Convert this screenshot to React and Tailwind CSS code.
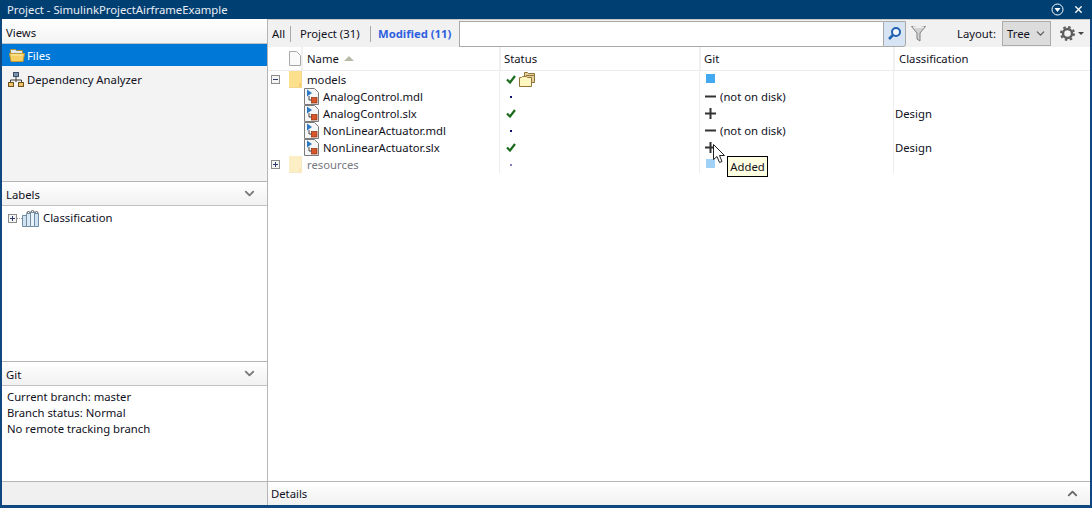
import { X, ChevronDown, ChevronUp } from "lucide-react";

const FONT = "font-['Noto_Sans','Open_Sans',sans-serif]";
const COLS = "grid grid-cols-[33px_198px_200px_194px_197px]";

const rows = [
  { name: "models", kind: "folder", tree: "minus", status: "check", folder: true, git: "square", cls: "" },
  { name: "AnalogControl.mdl", kind: "file", status: "dot", git: "minus", note: "(not on disk)", cls: "" },
  { name: "AnalogControl.slx", kind: "file", status: "check", git: "plus", cls: "Design" },
  { name: "NonLinearActuator.mdl", kind: "file", status: "dot", git: "minus", note: "(not on disk)", cls: "" },
  { name: "NonLinearActuator.slx", kind: "file", status: "check", git: "plus", cls: "Design" },
  { name: "resources", kind: "folder", tree: "plus", status: "dot", git: "square", faded: true, cls: "" },
];

function TreeBox({ type }) {
  return (
    <svg width="9" height="9" viewBox="0 0 9 9" className="shrink-0">
      <rect x="0.5" y="0.5" width="8" height="8" fill="#f4f4f4" stroke="#8c8c8c" />
      <path d={type === "plus" ? "M2 4.5h5M4.5 2v5" : "M2 4.5h5"} stroke="#2d3c6a" />
    </svg>
  );
}

function FolderTab({ faded }) {
  return (
    <svg width="13" height="17" viewBox="0 0 13 17" className={faded ? "opacity-50" : ""}>
      <rect x="0" y="0" width="12" height="16" fill="#fde08c" />
      <path d="M10 16v-4h3v5H0v-1z" fill="#f7cf70" />
      <path d="M12.5 0v16.5H0" fill="none" stroke="#f0d590" />
    </svg>
  );
}

function ModelFile() {
  return (
    <svg width="15" height="17" viewBox="0 0 15 17">
      <path d="M.5.5h10l4 4v12H.5z" fill="#f6f6f6" stroke="#7a7a7a" />
      <path d="M3 1.5v7l5-3.5z" fill="#2c78c4" />
      <path d="M5 8v4h3" fill="none" stroke="#444" />
      <rect x="7.5" y="9.5" width="5.5" height="5.5" fill="#d9562a" stroke="#8a3010" strokeWidth="0.7" />
    </svg>
  );
}

function OpenFolder() {
  return (
    <svg width="16" height="15" viewBox="0 0 16 15">
      <path d="M5.5 .5h3l1 1h6v9h-10z" fill="#e3cf9b" stroke="#93743a" />
      <path d="M7 3.5h8.5" stroke="#93743a" />
      <path d="M.5 5.5h2l1-1h4l1 1h4v9H.5z" fill="#fff6c0" stroke="#93743a" />
    </svg>
  );
}

function FilesFolder() {
  return (
    <svg width="16" height="13" viewBox="0 0 16 13">
      <path d="M1.5 .5h5l1 1h6v4h-12z" fill="#dfe8f0" stroke="#a98a3a" />
      <path d="M.5 4.5h13l2 0-1.5 8H2z" fill="#f7cf63" stroke="#c79a32" />
      <path d="M2 6h12" stroke="#fdeeb0" />
    </svg>
  );
}

function GreenCheck() {
  return (
    <svg width="10" height="9" viewBox="0 0 10 9">
      <path d="M1 4.5l3 3L9 1" fill="none" stroke="#1c6b1c" strokeWidth="2.2" />
    </svg>
  );
}

function GitMark({ type, faded }) {
  if (type === "square") {
    return <div className={`w-[9px] h-[9px] ml-px -mt-[2px] ${faded ? "bg-[#a0d2f8]" : "bg-[#42a9f1]"}`} />;
  }
  return (
    <svg width="11" height="11" viewBox="0 0 11 11">
      <path d={type === "plus" ? "M0 5.5h11M5.5 0v11" : "M0 5.5h11"} stroke="#333" strokeWidth="2" />
    </svg>
  );
}

function PanelHeader({ title }) {
  return (
    <div className="h-6 flex items-center justify-between pl-[4px] pr-[10px] bg-gradient-to-b from-white to-[#f1f1f1] border-b border-[#c2c2c2] shrink-0">
      <span className="pt-[2px]">{title}</span>
      <ChevronDown size={15} strokeWidth={3} className="text-[#7a7a7a]" />
    </div>
  );
}

function TreeRow({ row }) {
  return (
    <div className={`${COLS} h-[17px] items-center`}>
      <div className="flex items-center pl-[3px]">{row.tree && <TreeBox type={row.tree} />}</div>
      <div className={`flex items-center ${row.kind === "file" ? "gap-[4px] pl-[3px]" : "gap-[5px] -ml-[12px]"} ${row.faded ? "text-[#77777f]" : ""}`}>
        {row.kind === "folder" ? <FolderTab faded={row.faded} /> : <ModelFile />}
        <span>{row.name}</span>
      </div>
      <div className="flex items-center h-full pl-[6px] gap-[3px] border-l border-[#ededed]">
        {row.status === "check" ? (
          <GreenCheck />
        ) : (
          <div className={`w-[2px] h-[2px] ml-[4px] ${row.faded ? "bg-[#8080c0]" : "bg-[#101070]"}`} />
        )}
        {row.folder && <OpenFolder />}
      </div>
      <div className="flex items-center h-full pl-[5px] gap-[4px] border-l border-[#ededed]">
        <GitMark type={row.git} faded={row.faded} />
        {row.note && <span>{row.note}</span>}
      </div>
      <div className="flex items-center h-full pl-px border-l border-[#ededed]">{row.cls}</div>
    </div>
  );
}

export default function App() {
  return (
    <div className={`${FONT} w-[1092px] h-[508px] flex flex-col bg-[#0f477f] text-[11.3px] leading-none text-[#10101c] overflow-hidden`}>
      {/* title bar */}
      <div className="h-[19px] flex items-center justify-between pl-[7px] pr-[8px] bg-[#003f72] text-[#e8eef4] shrink-0">
        <span>Project - SimulinkProjectAirframeExample</span>
        <div className="flex items-center gap-[9px]">
          <svg width="13" height="13" viewBox="0 0 13 13">
            <circle cx="6.5" cy="6.5" r="5.5" fill="none" stroke="#fff" />
            <path d="M3.5 5h6l-3 4z" fill="#fff" />
          </svg>
          <X size={11} strokeWidth={3} className="text-white" />
        </div>
      </div>

      <div className="flex-1 flex mx-[2px] mb-[3px] min-h-0 bg-white">
        {/* left panel */}
        <div className="w-[266px] flex flex-col border-r border-[#b5b5b5] shrink-0">
          <div className="h-[162px] flex flex-col bg-[#f3f3f3] shrink-0">
            <div className="h-[25px] flex items-center pl-[4px] pt-[4px] bg-gradient-to-b from-white to-[#f3f3f3] border-b border-[#c2c2c2]">Views</div>
            <div className="h-[22px] flex items-center gap-[2px] pl-[7px] bg-[#0078d7] text-white">
              <FilesFolder />
              <span className="pt-px">Files</span>
            </div>
            <div className="h-[27px] flex items-center gap-[3px] pl-[6px]">
              <svg width="16" height="15" viewBox="0 0 16 15">
                <rect x="5.5" y=".5" width="5" height="4" fill="#7c93ad" stroke="#3d4e66" />
                <path d="M8 5v3M2.5 10V8h11v2M8 8v2" fill="none" stroke="#3d3d3d" />
                <rect x=".5" y="10.5" width="5" height="4" fill="#f0c463" stroke="#6c5422" />
                <rect x="10.5" y="10.5" width="5" height="4" fill="#f0c463" stroke="#6c5422" />
              </svg>
              <span className="pt-px">Dependency Analyzer</span>
            </div>
          </div>
          <div className="h-px bg-[#b5b5b5] shrink-0" />
          <div className="h-[179px] flex flex-col shrink-0">
            <PanelHeader title="Labels" />
            <div className="flex items-center pl-[6px] h-[24px]">
              <TreeBox type="plus" />
              <div className="w-[5px] border-t border-dotted border-[#9a9a9a]" />
              <svg width="17" height="17" viewBox="0 0 17 17">
                <path d="M.5 5.5h4v11h-4z" fill="#cfe3f2" stroke="#6f8ca3" />
                <path d="M4.5 3.5h4v13h-4z" fill="#dceaf5" stroke="#6f8ca3" />
                <path d="M8.5 2.5h4v14h-4z" fill="#e8f2f9" stroke="#6f8ca3" />
                <path d="M12.5 3.5h4v13h-4z" fill="#cfe3f2" stroke="#6f8ca3" />
                <path d="M5 3a1.5 1.5 0 0 1 3 0M9 2a1.5 1.5 0 0 1 3 0M13 3a1.5 1.5 0 0 1 3 0" fill="none" stroke="#555" />
              </svg>
              <span className="ml-[4px]">Classification</span>
            </div>
          </div>
          <div className="h-px bg-[#b5b5b5] shrink-0" />
          <div className="flex-1 flex flex-col min-h-0">
            <PanelHeader title="Git" />
            <div className="pl-[5px] pt-[3px] leading-[16px]">
              <div>Current branch: master</div>
              <div>Branch status: Normal</div>
              <div>No remote tracking branch</div>
            </div>
          </div>
          <div className="h-[24px] bg-[#f0f0f0] border-t border-[#b5b5b5] shrink-0" />
        </div>

        {/* right panel */}
        <div className="flex-1 flex flex-col min-w-0 relative">
          <div className="h-[28px] flex items-center bg-[#f1f1f1] border-t border-[#c8c8c8] shrink-0">
            <span className="pl-[4px] w-[22px] shrink-0">All</span>
            <div className="w-px h-[16px] bg-[#a8a8a8]" />
            <span className="ml-[9px] w-[70px] shrink-0">Project (31)</span>
            <div className="w-px h-[16px] bg-[#a8a8a8]" />
            <span className="ml-[7px] w-[81px] shrink-0 font-bold text-[#2f5fe0]">Modified (11)</span>
            <div className="h-[26px] w-[424px] bg-white border border-[#a9a9a9] border-r-0 shrink-0" />
            <div className="h-[26px] w-[23px] flex items-center justify-center bg-[#d7e4f3] border border-[#a9a9a9] rounded-br-[3px] shrink-0">
              <svg width="15" height="15" viewBox="0 0 15 15">
                <circle cx="9" cy="6" r="4" fill="#f4f8fc" stroke="#1f62b0" strokeWidth="2" />
                <path d="M6 9l-4 4" stroke="#1f62b0" strokeWidth="2.5" />
              </svg>
            </div>
            <svg width="15" height="17" viewBox="0 0 15 17" className="ml-[5px] shrink-0">
              <path d="M.5 1.5h14L9 8v8l-3-2V8z" fill="#d2d2d2" stroke="#808080" />
              <ellipse cx="7.5" cy="2" rx="6" ry="1" fill="#f2f2f2" />
            </svg>
            <span className="ml-[31px] w-[39px] shrink-0">Layout:</span>
            <div className="ml-[6px] w-[49px] h-[25px] flex items-center justify-between pl-[4px] pr-[3px] bg-[#dcdcdc] border border-[#ababab] shrink-0">
              <span>Tree</span>
              <ChevronDown size={13} className="text-[#555]" />
            </div>
            <svg width="15" height="15" viewBox="0 0 15 15" className="ml-[9px] shrink-0">
              <circle cx="7.5" cy="7.5" r="4.5" fill="#f4f4f4" stroke="#5e5e5e" strokeWidth="2.5" />
              <circle cx="7.5" cy="7.5" r="6.5" fill="none" stroke="#5e5e5e" strokeWidth="2" strokeDasharray="2.5 2.6" />
            </svg>
            <div className="ml-[3px] w-0 h-0 border-x-[3px] border-x-transparent border-t-[3px] border-t-[#444]" />
          </div>

          <div className={`${COLS} h-[24px] items-center border-b border-[#ececec] shrink-0`}>
            <div className="flex justify-end h-full items-center">
              <svg width="12" height="15" viewBox="0 0 12 15">
                <path d="M.5.5h7l4 4v10H.5z" fill="#fafafa" stroke="#a8a8a8" />
              </svg>
            </div>
            <div className="flex items-center gap-[5px] pl-[4px] h-full border-l-2 border-[#f0f0f0]">
              <span>Name</span>
              <div className="w-0 h-0 border-x-[5px] border-x-transparent border-b-[5px] border-b-[#b9b9a8]" />
            </div>
            <div className="pl-[3px] h-full flex items-center border-l-2 border-[#f0f0f0]">Status</div>
            <div className="pl-[3px] h-full flex items-center border-l-2 border-[#f0f0f0]">Git</div>
            <div className="pl-[4px] h-full flex items-center border-l-2 border-[#f0f0f0]">Classification</div>
          </div>

          <div className="flex-1 min-h-0">
            {rows.map((row) => (
              <TreeRow key={row.name} row={row} />
            ))}
          </div>

          <div className="h-[24px] flex items-center justify-between pl-[3px] pr-[10px] bg-gradient-to-b from-white to-[#f1f1f1] border-t border-[#b5b5b5] shrink-0">
            <span className="pt-px">Details</span>
            <ChevronUp size={15} strokeWidth={3} className="text-[#6a6a6a]" />
          </div>

          {/* tooltip and mouse pointer, floating over the table */}
          <div className="absolute left-[459px] top-[137px] h-[21px] w-[41px] flex items-center justify-center bg-[#ffffe1] border border-black">Added</div>
          <svg width="13" height="20" viewBox="0 0 13 20" className="absolute left-[445px] top-[125px]">
            <path d="M.5.5v15l3.5-3 2.5 6 2.5-1-2.5-6h5z" fill="#fff" stroke="#222" />
          </svg>
        </div>
      </div>
    </div>
  );
}
